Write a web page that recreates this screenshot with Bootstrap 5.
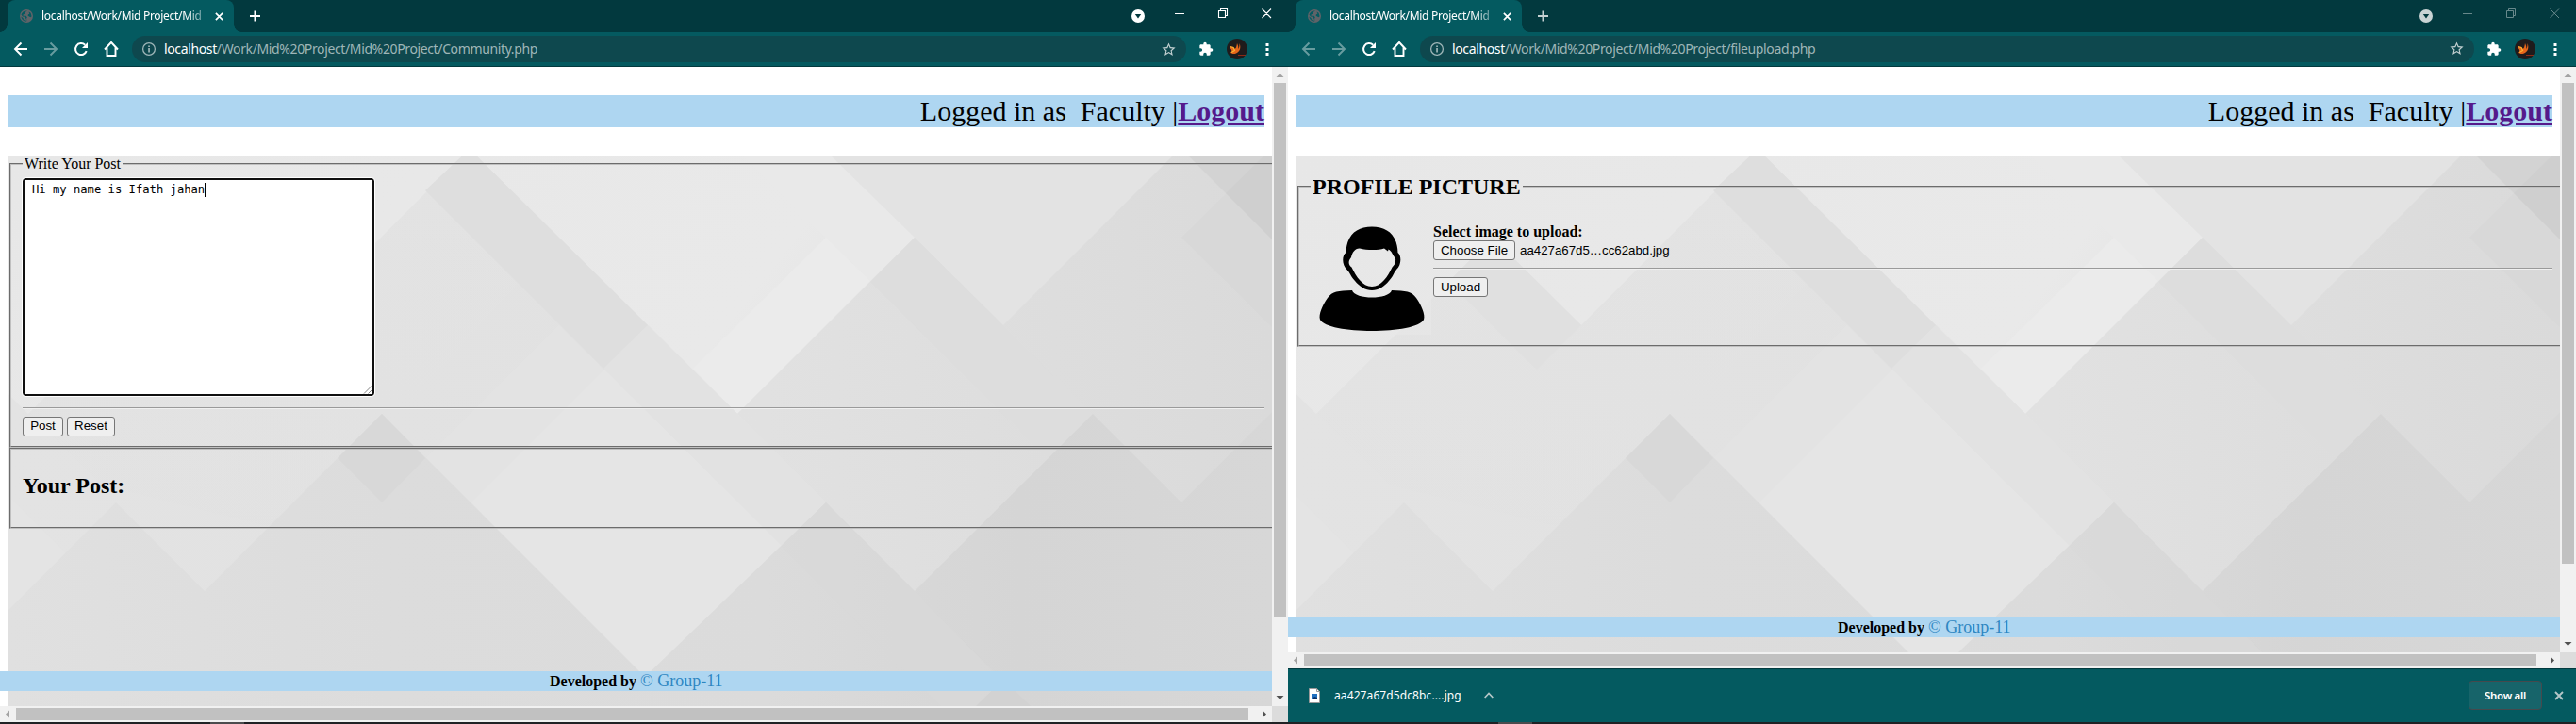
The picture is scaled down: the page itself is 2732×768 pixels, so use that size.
<!DOCTYPE html>
<html lang="en">
<head>
<meta charset="utf-8">
<title>Community and file upload</title>
<link href="https://cdn.jsdelivr.net/npm/bootstrap@5.3.0/dist/css/bootstrap.min.css" rel="stylesheet">
<style>
body{width:2732px;height:768px;overflow:hidden;background:#fff;font-family:"Noto Sans",sans-serif}
.win{width:1366px;height:768px;overflow:hidden}
svg{display:block;flex:none}
.strip{height:34px;background:#02393e;padding-left:8px}
.tabx{width:240px;background:#045a60;border-radius:8px 8px 0 0;padding:0 11px 0 13px;color:#fff;font-size:12px}
.tabx::before,.tabx::after{content:"";position:absolute;bottom:0;width:8px;height:8px}
.tabx::before{left:-8px;background:radial-gradient(circle at 0 0,transparent 7.5px,#045a60 8px)}
.tabx::after{right:-8px;background:radial-gradient(circle at 100% 0,transparent 7.5px,#045a60 8px)}
.tabname{white-space:nowrap;margin-left:9px;line-height:18px;letter-spacing:-.3px;-webkit-mask-image:linear-gradient(90deg,#000 152px,rgba(0,0,0,.35) 172px)}
.bar{height:37px;background:#045a60;border-bottom:1px solid #02393e;color:#fff;padding-left:14px}
.omni{width:1118px;height:28px;border-radius:14px;background:#0e484e;font-size:14px;color:#9fb6b8;padding:0 10px}
.omni b{font-weight:400;color:#fff}
.url{white-space:nowrap;margin-left:8px;line-height:20px;letter-spacing:-.37px}
.dim{opacity:.4}
.fwd{transform:scaleX(-1)}
.view{color:#000;font:16px "Liberation Serif",serif}
.doc{width:1349px;overflow:hidden;background:#fff;padding:30px 0 0 8px}
.logbar{width:1333px;height:34px;line-height:34px;font-size:30px;background:#aed6f1;text-align:right;white-space:pre;margin-bottom:30px}
.logbar a{color:#551a8b;font-weight:700;text-decoration:underline}
.scene{width:1341px;height:600px;background:#e5e5e5 0 0/1341px 600px no-repeat url("data:image/svg+xml,%3Csvg xmlns='http://www.w3.org/2000/svg' viewBox='0 0 1341 600'%3E%3Cdefs%3E%3ClinearGradient id='a' x1='0' y1='0' x2='1' y2='.35'%3E%3Cstop stop-color='%23e7e7e7'/%3E%3Cstop offset='.6' stop-color='%23e9e9e9'/%3E%3Cstop offset='.7' stop-color='%23e3e3e3'/%3E%3Cstop offset='1' stop-color='%23e2e2e2'/%3E%3C/linearGradient%3E%3ClinearGradient id='b' gradientUnits='userSpaceOnUse' x1='0' y1='0' x2='1341' y2='0'%3E%3Cstop stop-color='%23e3e3e3'/%3E%3Cstop offset='.6' stop-color='%23e1e1e1'/%3E%3Cstop offset='1' stop-color='%23dadada'/%3E%3C/linearGradient%3E%3ClinearGradient id='c' gradientUnits='userSpaceOnUse' x1='0' y1='0' x2='1341' y2='0'%3E%3Cstop stop-color='%23e0e0e0'/%3E%3Cstop offset='.3' stop-color='%23dcdcdc'/%3E%3Cstop offset='.6' stop-color='%23dbdbdb'/%3E%3Cstop offset='.8' stop-color='%23d5d5d5'/%3E%3Cstop offset='1' stop-color='%23d7d7d7'/%3E%3C/linearGradient%3E%3ClinearGradient id='d' x1='0' y1='0' x2='0' y2='1'%3E%3Cstop stop-color='%23e6e6e6'/%3E%3Cstop offset='1' stop-color='%23e0e0e0'/%3E%3C/linearGradient%3E%3C/defs%3E%3Cpath fill='url(%23a)' d='M0 0H1341V600H0z'/%3E%3Cpath fill='%23e3e3e3' d='M692 0H873L1056 180L962 87L868 0zM692 0H1236L1056 180L962 93L962 87L779 -90z'/%3E%3Cpath fill='%23e9e9e9' d='M692 0H873L962 87L915 133L868 87L781 0z'/%3E%3Cpath fill='%23ebebeb' d='M868 87L727 226L774 274L915 133z'/%3E%3Cpath fill='url(%23b)' d='M0 252L22 274L209 87L303 180L490 -7L774 274L962 87L1056 180L1236 0H1341V600H0z'/%3E%3Cpath fill='url(%23d)' d='M22 274L209 87L303 180L490 -7L585 87L303 400L100 350z' fill-opacity='.25'/%3E%3Cpath fill='%23dedede' d='M490 -7L679 180L632 226L443 37z'/%3E%3Cpath fill='%23e0e0e0' d='M209 87L303 180L256 227L162 134z'/%3E%3Cpath fill='%23dddddd' d='M962 87L1150 274L1103 321L915 134z'/%3E%3Cpath fill='%23e3e3e3' d='M585 180L397 368L585 556L774 368z'/%3E%3Cpath fill='%23e4e4e4' d='M0 360L115 475L0 590z'/%3E%3Cpath fill='%23e5e5e5' d='M492 368L680 180L868 368L675 560z'/%3E%3Cpath fill='%23e2e2e2' d='M679 180L774 274L868 368L822 415L632 226z'/%3E%3Cpath fill='url(%23c)' d='M0 483L115 368L209 462L397 274L676 553L868 368L962 462L1151 274L1245 368L1341 272V600H0z'/%3E%3Cpath fill='%23d8d8d8' d='M397 274L443 321L397 368L350 321z'/%3E%3Cpath fill='%23d8d8d8' fill-opacity='.6' d='M868 368L1098 600H1006L821 415z'/%3E%3Cpath fill='%23d8d8d8' d='M1341 182L1245 87L1333 0H1341z'/%3E%3Cpath fill='%23d3d3d3' d='M1252 0L1341 89V0z'/%3E%3Cpath fill='%23cfcfcf' d='M1333 0L1292 40L1341 89V0z'/%3E%3Cpath fill='%23d2d2d2' d='M1027 584L1056 556L1085 584z'/%3E%3C/svg%3E")}
fieldset.grv{border:2px groove #c0c0c0;margin:0 -14px 0 2px;padding:5.6px 20px 10px 12px}
fieldset.grv>legend{float:none;width:auto;font-size:16px;line-height:18.4px;margin:0;padding:0 2px;height:18.4px}
fieldset.grv>legend.big{height:67px}
.ttl{font-size:24px;font-weight:700;line-height:27px;margin:19.9px 0}
.inbox{width:373px;height:231px;background:#fff;border:2px solid #101010;border-radius:3px;outline:1px solid #fff;font:12.18px/15px "DejaVu Sans Mono",monospace;padding:3px 8px}
.caret{width:1px;height:15px;background:#000}
.rule{height:2px;border-top:1px solid #9a9a9a;border-bottom:1px solid #f0f0f0;margin:8px 0;width:auto}
.pb{height:21px;border:1px solid #767676;border-radius:3px;background:#efefef;color:#000;font:13.33px/18px "Liberation Sans",sans-serif;padding:0;text-align:center}
.foot{left:0;right:0;bottom:16px;height:21px;line-height:21px;background:#aed6f1;padding-left:583px}
.foot span{color:#2e86c1;font-size:18px}
.vs{width:17px;background:#f1f1f1;padding:17px 2px 0}
.hs{height:17px;background:#f1f1f1}
.th{background:#c1c1c1}
.task{height:2px;background:#202124}
.shelf{height:58px;background:#045a60;border-top:1px solid #02393e;color:#fff;font-size:12px}
.showall{width:78px;height:31px;border:1px solid #46494d;border-radius:4px;background:#17646a;font-size:11.5px;font-weight:600;line-height:29px;text-align:center;letter-spacing:-.3px}
</style>
</head>
<body>
<svg width="0" height="0" class="position-absolute">
<symbol id="globe" viewBox="0 0 14 14"><circle cx="7" cy="7" r="7" fill="#5f6368"/><path fill="#045a60" d="M8 1.500 5.500 3v1.500L3.500 5.500v1.300h3l1.300 1.400-.6 1.200v3.200C4 12.700 1.500 10 1.500 7.500l2.200 1.700v1.100l1.600 1.800 1.200-.2.400-1.500-1.700-2.600L3 7.400 1.500 5.500C2.300 3 4.500 1.300 8 1.500zM9.500 2.500l2.100 1.300L12.500 7l-.5 1.300-1.700-.6L8.500 6.500l.5-1.300 1.300-.5z"/></symbol>
<symbol id="xx" viewBox="0 0 10 10"><path d="M1 1l8 8M9 1 1 9" stroke="currentColor" stroke-width="1.900"/></symbol>
<symbol id="back" viewBox="0 0 16 16"><path d="M15 8H2.500M8.500 1.500 2 8l6.500 6.500" fill="none" stroke="currentColor" stroke-width="1.900"/></symbol>
<symbol id="reload" viewBox="0 0 16 16"><path d="M13.700 10.200A6 6 0 1 1 12.200 3.700" fill="none" stroke="currentColor" stroke-width="2"/><path d="M15 1V7H9z" fill="currentColor"/></symbol>
<symbol id="home" viewBox="0 0 18 18"><path d="M2 9.500 9 2l7 7.500M4.500 7.500V16h9V7.500" fill="none" stroke="currentColor" stroke-width="1.900"/></symbol>
<symbol id="info" viewBox="0 0 16 16"><circle cx="8" cy="8" r="6.400" fill="none" stroke="currentColor" stroke-width="1.300"/><path d="M7.200 7h1.700v4.500H7.200zM7.200 4.400h1.700v1.700H7.200z" fill="currentColor"/></symbol>
<symbol id="star" viewBox="0 0 24 24"><path fill="currentColor" d="M22 9.240l-7.190-.62L12 2 9.190 8.630 2 9.240l5.460 4.730L5.820 21 12 17.270 18.180 21l-1.630-7.030L22 9.240zM12 15.400l-3.760 2.270 1-4.280-3.320-2.880 4.380-.38L12 6.100l1.710 4.040 4.380.38-3.320 2.880 1 4.280L12 15.400z"/></symbol>
<symbol id="puz" viewBox="0 0 24 24"><path fill="currentColor" d="M20.500 11H19V7c0-1.100-.9-2-2-2h-4V3.500a2.500 2.500 0 0 0-5 0V5H4c-1.100 0-1.990.9-1.990 2v3.800H3.500a2.700 2.700 0 0 1 0 5.400H2V20c0 1.100.9 2 2 2h3.800v-1.500a2.700 2.700 0 0 1 5.400 0V22H17c1.100 0 2-.9 2-2v-4h1.500a2.500 2.500 0 0 0 0-5z"/></symbol>
<symbol id="ava" viewBox="0 0 22 22"><circle cx="11" cy="11" r="11" fill="#1f1b1c"/><path d="M3 8c2 1.500 3.500-.5 5 2 1 2 2.500-.5 3-5 1 2.500 1.700 3.500 1 6 1.500-1.500 1.600-4 1.500-6 2 4.500.3 9-3.500 10.500-2.500 1-5 .5-6-1 2-.3 1.500-2 .5-3.500C4 10.500 3 9.500 3 8z" fill="#e5651b"/><path d="M3.500 8.500l3.500 1 1.500 3-3.500 2" fill="none" stroke="#f9b233" stroke-width="1.300"/><path d="M12 17.500h8" stroke="#8a2a17"/></symbol>
<symbol id="dots" viewBox="0 0 4 16"><path fill="currentColor" d="M.5 2h3v3h-3zM.5 7h3v3h-3zM.5 12h3v3h-3z"/></symbol>
</svg>
<main class="d-flex">

<section class="win d-flex flex-column">
  <div class="strip d-flex">
    <div class="tabx position-relative d-flex align-items-center"><svg width="14" height="14"><use href="#globe"/></svg><div class="tabname">localhost/Work/Mid Project/Mid</div><svg class="ms-auto" width="9" height="9"><use href="#xx"/></svg></div>
    <svg class="align-self-center" style="margin-left:17px" width="11" height="12" viewBox="0 0 11 12"><path d="M0 6h11M5.500.5v11" stroke="#fff" stroke-width="2"/></svg>
    <svg class="ms-auto" width="166" height="34" viewBox="0 0 166 34"><circle cx="7" cy="17" r="7" fill="#fff"/><path d="M3.800 15h6.400L7 19.500z" fill="#02393e"/><path d="M46 14.500h10M92.500 11.500h7v7h-7zM94.500 11v-1.500h7v7H100M138.500 9.500l9.500 9.500M148 9.500l-9.500 9.500" fill="none" stroke="#fff" stroke-width="1.100"/></svg>
  </div>
  <div class="bar d-flex align-items-center">
    <svg width="16" height="16"><use href="#back"/></svg>
    <svg class="dim fwd" style="margin-left:16px" width="16" height="16"><use href="#back"/></svg>
    <svg class="ms-3" width="16" height="16"><use href="#reload"/></svg>
    <svg style="margin-left:15px" width="18" height="18"><use href="#home"/></svg>
    <div class="omni d-flex align-items-center" style="margin-left:13px"><svg width="16" height="16"><use href="#info"/></svg><div class="url"><b>localhost</b>/Work/Mid%20Project/Mid%20Project/Community.php</div><svg class="ms-auto" width="17" height="17" color="#c3d0d1"><use href="#star"/></svg></div>
    <svg style="margin-left:13px" width="16" height="16"><use href="#puz"/></svg>
    <svg style="margin-left:14px" width="22" height="22"><use href="#ava"/></svg>
    <svg style="margin-left:19px" width="4" height="16"><use href="#dots"/></svg>
  </div>
  <div class="view d-flex" style="height:678px">
    <div class="doc position-relative">
      <div class="logbar">Logged in as  Faculty |<a href="#">Logout</a></div>
      <div class="scene">
        <fieldset class="grv">
          <legend>Write Your Post</legend>
          <div class="inbox d-flex position-relative">Hi my name is Ifath jahan<i class="caret"></i>
            <svg class="position-absolute bottom-0 end-0" width="10" height="10" viewBox="0 0 10 10"><path d="M1 9.500 9.500 1M5.500 9.500l4-4" stroke="#777" stroke-width=".9"/></svg></div>
          <div class="rule" style="margin-top:12px"></div>
          <div class="d-flex gap-1"><button class="pb" style="width:43px">Post</button><button class="pb" style="width:51px">Reset</button></div>
        </fieldset>
        <fieldset class="grv"><h2 class="ttl">Your Post:</h2></fieldset>
      </div>
      <div class="foot position-absolute"><b>Developed by</b> <span>© Group-11</span></div>
    </div>
    <div class="vs position-relative"><svg class="position-absolute top-0 start-0" width="17" height="17" viewBox="0 0 17 17"><path d="M4.500 11h8L8.500 7z" fill="#a3a3a3"/></svg><div class="th" style="height:566px"></div><svg class="position-absolute bottom-0 start-0" width="17" height="17" viewBox="0 0 17 17"><path d="M4.500 6h8l-4 4z" fill="#505050"/></svg></div>
  </div>
  <div class="hs d-flex align-items-center"><svg width="17" height="17" viewBox="0 0 17 17"><path d="M10 4.500v8L6 8.500z" fill="#a3a3a3"/></svg><div class="th" style="width:1307px;height:13px"></div><svg class="ms-2" width="17" height="17" viewBox="0 0 17 17"><path d="M7 4.500v8l4-4z" fill="#505050"/></svg><div class="ms-auto h-100" style="width:17px;background:#dcdcdc"></div></div>
  <div class="task"><div class="h-100" style="margin-left:223px;width:36px;background:#4b4b4d"></div></div>
</section>

<section class="win d-flex flex-column">
  <div class="strip d-flex">
    <div class="tabx position-relative d-flex align-items-center"><svg width="14" height="14"><use href="#globe"/></svg><div class="tabname">localhost/Work/Mid Project/Mid</div><svg class="ms-auto" width="9" height="9"><use href="#xx"/></svg></div>
    <svg class="align-self-center" style="margin-left:17px" width="11" height="12" viewBox="0 0 11 12"><path d="M0 6h11M5.500.5v11" stroke="#c3d0d1" stroke-width="2"/></svg>
    <svg class="ms-auto" width="166" height="34" viewBox="0 0 166 34"><circle cx="7" cy="17" r="7" fill="#c9d3d4"/><path d="M3.800 15h6.400L7 19.500z" fill="#02393e"/><path d="M46 14.500h10M92.500 11.500h7v7h-7zM94.500 11v-1.500h7v7H100M138.500 9.500l9.500 9.500M148 9.500l-9.500 9.500" fill="none" stroke="#67888b"/></svg>
  </div>
  <div class="bar d-flex align-items-center">
    <svg class="dim" width="16" height="16"><use href="#back"/></svg>
    <svg class="dim fwd" style="margin-left:16px" width="16" height="16"><use href="#back"/></svg>
    <svg class="ms-3" width="16" height="16"><use href="#reload"/></svg>
    <svg style="margin-left:15px" width="18" height="18"><use href="#home"/></svg>
    <div class="omni d-flex align-items-center" style="margin-left:13px"><svg width="16" height="16"><use href="#info"/></svg><div class="url"><b>localhost</b>/Work/Mid%20Project/Mid%20Project/fileupload.php</div><svg class="ms-auto" width="17" height="17" color="#c3d0d1"><use href="#star"/></svg></div>
    <svg style="margin-left:13px" width="16" height="16"><use href="#puz"/></svg>
    <svg style="margin-left:14px" width="22" height="22"><use href="#ava"/></svg>
    <svg style="margin-left:19px" width="4" height="16"><use href="#dots"/></svg>
  </div>
  <div class="view d-flex" style="height:621px">
    <div class="doc position-relative">
      <div class="logbar">Logged in as  Faculty |<a href="#">Logout</a></div>
      <div class="scene">
        <fieldset class="grv">
          <legend class="big"><h2 class="ttl">PROFILE PICTURE</h2></legend>
          <div class="d-flex">
            <svg width="130" height="119" viewBox="0 0 130 119"><path d="M1 0h127v118H1z" fill="#e8e8e8" fill-opacity=".6"/>
              <path fill="#000" fill-rule="evenodd" d="M65 3.500C48 3.500 38 13 37.500 31 33 34 33 44 38.500 49 43 54 41 54 47 61 52 67 58 71 65 71S78 67 83 61C89 54 87 54 91 49 96.500 44 96.500 34 92.500 31 92 13 82 3.500 65 3.500zM43 36C44 31 47 26.300 52 26.500 60 28.500 72 28.500 78 26.500L82 29.500 82.500 27.500C86 29 87 34 90 37 90.500 42 89 44 86.500 46.500 82 56 75 67 65 67S48 56 43.500 46.500C40 44 39.500 40 43 36z"/>
              <path fill="#000" d="M44 71C47 81 83 81 86 71 101 71.500 107 72 112 79 117 86 122 97 120 102 116 110 91 114 65 114S14 110 10 102C8 97 13 86 18 79 23 72 29 71.500 44 71z"/></svg>
            <div class="flex-grow-1">
              <div style="height:18px;line-height:18px"><b>Select image to upload:</b></div>
              <div class="d-flex"><button class="pb" style="width:87px">Choose File</button><span style="font:13.28px/21px 'Liberation Sans',sans-serif;margin-left:5px">aa427a67d5…cc62abd.jpg</span></div>
              <div class="rule"></div>
              <button class="pb d-block" style="width:58px">Upload</button>
            </div>
          </div>
        </fieldset>
      </div>
      <div class="foot position-absolute"><b>Developed by</b> <span>© Group-11</span></div>
    </div>
    <div class="vs position-relative"><svg class="position-absolute top-0 start-0" width="17" height="17" viewBox="0 0 17 17"><path d="M4.500 11h8L8.500 7z" fill="#a3a3a3"/></svg><div class="th" style="height:510px"></div><svg class="position-absolute bottom-0 start-0" width="17" height="17" viewBox="0 0 17 17"><path d="M4.500 6h8l-4 4z" fill="#505050"/></svg></div>
  </div>
  <div class="hs d-flex align-items-center"><svg width="17" height="17" viewBox="0 0 17 17"><path d="M10 4.500v8L6 8.500z" fill="#a3a3a3"/></svg><div class="th" style="width:1307px;height:13px"></div><svg class="ms-2" width="17" height="17" viewBox="0 0 17 17"><path d="M7 4.500v8l4-4z" fill="#505050"/></svg><div class="ms-auto h-100" style="width:17px;background:#dcdcdc"></div></div>
  <div class="shelf d-flex align-items-center">
    <svg style="margin-left:22px" width="12" height="16" viewBox="0 0 12 16"><path d="M.5.500h8l3 3v12H.5z" fill="#fff" stroke="#999"/><path d="M8.500.5v3h3" fill="none" stroke="#999"/><path d="M3 6h6v6H3z" fill="#1f6fc0"/><path d="M3 12l3-3 3 1v2z" fill="#0b2f63"/></svg>
    <span style="margin-left:15px;width:160px;letter-spacing:.1px">aa427a67d5dc8bc....jpg</span>
    <svg style="margin-left:-1px" width="10" height="7" viewBox="0 0 10 7"><path d="M.7 6 5 1.500 9.300 6" fill="none" stroke="#b5c7c8" stroke-width="1.700"/></svg>
    <div style="margin-left:18px;width:1px;height:44px;background:#4c8387"></div>
    <div class="showall ms-auto">Show all</div>
    <svg style="margin:0 13px" width="10" height="10" color="#b5c7c8"><use href="#xx"/></svg>
  </div>
  <div class="task"><div class="h-100" style="margin-left:223px;width:36px;background:#4b4b4d"></div></div>
</section>
</main>
<script src="https://cdn.jsdelivr.net/npm/bootstrap@5.3.0/dist/js/bootstrap.bundle.min.js"></script>
</body>
</html>
